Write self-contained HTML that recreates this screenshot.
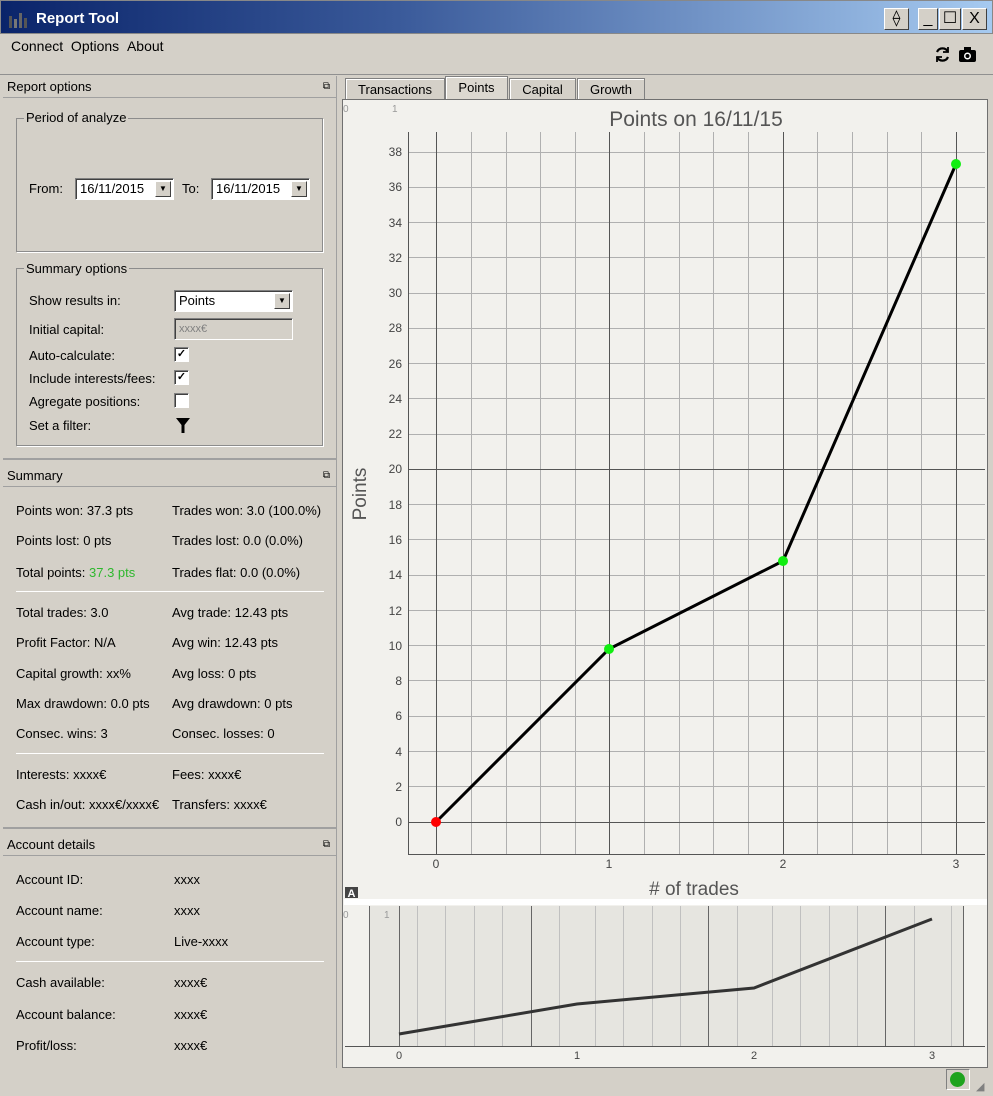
<!DOCTYPE html>
<html><head><meta charset="utf-8"><style>
*{margin:0;padding:0;box-sizing:border-box}
body{width:993px;height:1096px;background:#d4d0c8;font-family:"Liberation Sans",sans-serif;font-size:12px;color:#000;position:relative;overflow:hidden}
.a{position:absolute;white-space:nowrap}
.title{left:0;top:0;width:993px;height:34px;background:linear-gradient(90deg,#0a246a,#3a5a9a 40%,#a6caf0);border:1px solid #888}
.wb{position:absolute;top:8px;height:22px;background:#d4d0c8;border:1px solid;border-color:#fff #404040 #404040 #fff;font:16px "Liberation Sans",sans-serif;text-align:center;line-height:20px}
.hdr{border-bottom:1px solid #a0a0a0;height:22px;font-size:13px;line-height:22px;padding-left:4px;position:relative}
.grp{border:1px solid #8c8c8c;box-shadow:1px 1px 0 #fff}
.gl{background:#d4d0c8;padding:0 2px}
.inp{background:#fff;border:1px solid;border-color:#808080 #fff #fff #808080;box-shadow:inset 1px 1px 0 #404040;height:22px;line-height:20px;padding-left:4px;font-size:13px}
.dd{position:absolute;right:2px;top:2px;width:16px;height:16px;background:#d4d0c8;border:1px solid;border-color:#fff #404040 #404040 #fff;font-size:8px;line-height:14px;text-align:center}
.cb{width:15px;height:15px;background:#fff;border:1px solid;border-color:#808080 #fff #fff #808080;box-shadow:inset 1px 1px 0 #404040;font-size:11px;line-height:12px;text-align:center;font-weight:bold}
.t{font-size:13px}
.sep{height:1px;background:#a0a0a0;border-bottom:1px solid #fff}
.tab{position:absolute;top:78px;height:21px;border:1px solid #808080;border-bottom:none;background:#d4d0c8;font-size:13px;text-align:center;line-height:22px;box-shadow:inset 1px 1px 0 #fff}
</style></head><body>
<div class="a title"></div>
<svg class="a" style="left:8px;top:10px" width="20" height="18"><rect x="1" y="6" width="3" height="12" fill="#555"/><rect x="6" y="9" width="3" height="9" fill="#777"/><rect x="11" y="3" width="3" height="15" fill="#666"/><rect x="16" y="8" width="3" height="10" fill="#555"/></svg>
<div class="a" style="left:36px;top:10px;color:#fff;font-weight:bold;font-size:15px">Report Tool</div>
<div class="wb" style="left:884px;width:25px">⟠</div>
<div class="wb" style="left:918px;width:20px">_</div>
<div class="wb" style="left:939px;width:22px">☐</div>
<div class="wb" style="left:962px;width:25px">X</div>
<div class="a t" style="left:11px;top:38px;font-size:14px">Connect&nbsp;&nbsp;Options&nbsp;&nbsp;About</div>
<svg class="a" style="left:934px;top:46px" width="17" height="17" fill="none" stroke="#000" stroke-width="2.2"><path d="M14 6A6 6 0 0 0 3 6M3 11A6 6 0 0 0 14 11"/><path d="M14 1V6H9M3 16V11H8" stroke-width="1.8"/></svg>
<svg class="a" style="left:959px;top:47px" width="17" height="15"><rect x="0" y="3" width="17" height="12" rx="2"/><rect x="5" y="0" width="7" height="4"/><circle cx="8.5" cy="9" r="3.5" fill="#fff"/><circle cx="8.5" cy="9" r="2"/></svg>
<div class="a" style="left:0;top:74px;width:993px;height:1px;background:#909090"></div>

<!-- left panel -->
<div class="a" style="left:3px;top:76px;width:333px">
<div class="hdr">Report options<span style="position:absolute;right:6px;font-size:10px">⧉</span></div></div>
<div class="a grp" style="left:16px;top:118px;width:307px;height:134px"></div>
<div class="a gl t" style="left:24px;top:110px">Period of analyze</div>
<div class="a t" style="left:29px;top:181px">From:</div>
<div class="a inp" style="left:75px;top:178px;width:99px">16/11/2015<span class="dd">▼</span></div>
<div class="a t" style="left:182px;top:181px">To:</div>
<div class="a inp" style="left:211px;top:178px;width:99px">16/11/2015<span class="dd">▼</span></div>
<div class="a grp" style="left:16px;top:268px;width:307px;height:178px"></div>
<div class="a gl t" style="left:24px;top:261px">Summary options</div>
<div class="a t" style="left:29px;top:293px">Show results in:</div>
<div class="a inp" style="left:174px;top:290px;width:119px">Points<span class="dd">▼</span></div>
<div class="a t" style="left:29px;top:322px">Initial capital:</div>
<div class="a inp" style="left:174px;top:318px;width:119px;background:#d4d0c8;color:#808080;font-size:11px">xxxx€</div>
<div class="a t" style="left:29px;top:348px">Auto-calculate:</div><div class="a cb" style="left:174px;top:347px">✓</div>
<div class="a t" style="left:29px;top:371px">Include interests/fees:</div><div class="a cb" style="left:174px;top:370px">✓</div>
<div class="a t" style="left:29px;top:394px">Agregate positions:</div><div class="a cb" style="left:174px;top:393px"></div>
<div class="a t" style="left:29px;top:418px">Set a filter:</div>
<svg class="a" style="left:176px;top:418px" width="14" height="15"><path d="M0 0H14L8.5 7V15H5.5V7Z"/></svg>
<div class="a" style="left:3px;top:458px;width:333px;height:2px;background:#a0a0a0"></div>

<div class="a" style="left:3px;top:465px;width:333px"><div class="hdr">Summary<span style="position:absolute;right:6px;font-size:10px">⧉</span></div></div>
<div class="a t" style="left:16px;top:503px">Points won: 37.3 pts</div><div class="a t" style="left:172px;top:503px">Trades won: 3.0 (100.0%)</div>
<div class="a t" style="left:16px;top:533px">Points lost: 0 pts</div><div class="a t" style="left:172px;top:533px">Trades lost: 0.0 (0.0%)</div>
<div class="a t" style="left:16px;top:565px">Total points: <span style="color:#2eb82e">37.3 pts</span></div><div class="a t" style="left:172px;top:565px">Trades flat: 0.0 (0.0%)</div>
<div class="a sep" style="left:16px;top:591px;width:308px"></div>
<div class="a t" style="left:16px;top:605px">Total trades: 3.0</div><div class="a t" style="left:172px;top:605px">Avg trade: 12.43 pts</div>
<div class="a t" style="left:16px;top:635px">Profit Factor: N/A</div><div class="a t" style="left:172px;top:635px">Avg win: 12.43 pts</div>
<div class="a t" style="left:16px;top:666px">Capital growth: xx%</div><div class="a t" style="left:172px;top:666px">Avg loss: 0 pts</div>
<div class="a t" style="left:16px;top:696px">Max drawdown: 0.0 pts</div><div class="a t" style="left:172px;top:696px">Avg drawdown: 0 pts</div>
<div class="a t" style="left:16px;top:726px">Consec. wins: 3</div><div class="a t" style="left:172px;top:726px">Consec. losses: 0</div>
<div class="a sep" style="left:16px;top:753px;width:308px"></div>
<div class="a t" style="left:16px;top:767px">Interests: xxxx€</div><div class="a t" style="left:172px;top:767px">Fees: xxxx€</div>
<div class="a t" style="left:16px;top:797px">Cash in/out: xxxx€/xxxx€</div><div class="a t" style="left:172px;top:797px">Transfers: xxxx€</div>
<div class="a" style="left:3px;top:827px;width:333px;height:2px;background:#a0a0a0"></div>

<div class="a" style="left:3px;top:834px;width:333px"><div class="hdr">Account details<span style="position:absolute;right:6px;font-size:10px">⧉</span></div></div>
<div class="a t" style="left:16px;top:872px">Account ID:</div><div class="a t" style="left:174px;top:872px">xxxx</div>
<div class="a t" style="left:16px;top:903px">Account name:</div><div class="a t" style="left:174px;top:903px">xxxx</div>
<div class="a t" style="left:16px;top:934px">Account type:</div><div class="a t" style="left:174px;top:934px">Live-xxxx</div>
<div class="a sep" style="left:16px;top:961px;width:308px"></div>
<div class="a t" style="left:16px;top:975px">Cash available:</div><div class="a t" style="left:174px;top:975px">xxxx€</div>
<div class="a t" style="left:16px;top:1007px">Account balance:</div><div class="a t" style="left:174px;top:1007px">xxxx€</div>
<div class="a t" style="left:16px;top:1038px">Profit/loss:</div><div class="a t" style="left:174px;top:1038px">xxxx€</div>
<div class="a" style="left:336px;top:76px;width:1px;height:992px;background:#a0a0a0"></div>

<!-- tabs -->
<div class="tab" style="left:345px;width:100px">Transactions</div>
<div class="tab" style="left:445px;width:63px;top:76px;height:24px;background:#dcd8d0">Points</div>
<div class="tab" style="left:509px;width:67px">Capital</div>
<div class="tab" style="left:577px;width:68px">Growth</div>

<svg class="a" style="left:342px;top:99px" width="646" height="969" font-family="Liberation Sans,sans-serif">
<rect x="0.5" y="0.5" width="645" height="968" fill="#f2f1ed" stroke="#707070"/>
<g transform="translate(-342,-99)">
<text x="343" y="112" font-size="10" fill="#999">0</text><text x="392" y="112" font-size="10" fill="#999">1</text>
<text x="696" y="126" font-size="21" fill="#555" text-anchor="middle">Points on 16/11/15</text>
<g stroke="#b0b0b0" stroke-width="1" fill="none">
<path d="M471.5 132V854M506.5 132V854M540.5 132V854M575.5 132V854M644.5 132V854M679.5 132V854M713.5 132V854M748.5 132V854M817.5 132V854M852.5 132V854M887.5 132V854M921.5 132V854"/>
<path d="M408 786.5H985M408 751.5H985M408 716.5H985M408 680.5H985M408 645.5H985M408 610.5H985M408 575.5H985M408 539.5H985M408 504.5H985M408 434.5H985M408 398.5H985M408 363.5H985M408 328.5H985M408 293.5H985M408 257.5H985M408 222.5H985M408 187.5H985M408 152.5H985"/>
</g>
<g stroke="#555" fill="none"><path d="M436.5 132V854M609.5 132V854M783.5 132V854M956.5 132V854M408 469.5H985M408 822.5H985"/><path d="M408.5 132V854.5H985"/></g>
<g font-size="12" fill="#444" text-anchor="end">
<text x="402" y="826">0</text><text x="402" y="791">2</text><text x="402" y="756">4</text><text x="402" y="720">6</text><text x="402" y="685">8</text><text x="402" y="650">10</text><text x="402" y="615">12</text><text x="402" y="579">14</text><text x="402" y="544">16</text><text x="402" y="509">18</text><text x="402" y="473">20</text><text x="402" y="438">22</text><text x="402" y="403">24</text><text x="402" y="368">26</text><text x="402" y="332">28</text><text x="402" y="297">30</text><text x="402" y="262">32</text><text x="402" y="227">34</text><text x="402" y="191">36</text><text x="402" y="156">38</text>
</g>
<g font-size="12" fill="#444" text-anchor="middle"><text x="436" y="868">0</text><text x="609" y="868">1</text><text x="783" y="868">2</text><text x="956" y="868">3</text></g>
<text x="366" y="494" font-size="19" fill="#555" text-anchor="middle" transform="rotate(-90 366 494)">Points</text>
<text x="694" y="895" font-size="19" fill="#555" text-anchor="middle"># of trades</text>
<polyline points="436,822 609,649 783,561 956,164" fill="none" stroke="#000" stroke-width="3"/>
<circle cx="436" cy="822" r="5" fill="#f00"/><circle cx="609" cy="649" r="5" fill="#1e1"/><circle cx="783" cy="561" r="5" fill="#1e1"/><circle cx="956" cy="164" r="5" fill="#1e1"/>
<rect x="345" y="887" width="13" height="11" fill="#444"/><text x="351.5" y="897" font-size="11" fill="#fff" font-weight="bold" text-anchor="middle">A</text>
<rect x="344" y="899" width="643" height="6" fill="#fff"/>
<rect x="369" y="906" width="594" height="140" fill="#e6e5e0"/>
<g stroke="#c0c0c0" fill="none"><path d="M417.5 906V1046M445.5 906V1046M474.5 906V1046M502.5 906V1046M559.5 906V1046M595.5 906V1046M623.5 906V1046M652.5 906V1046M680.5 906V1046M737.5 906V1046M772.5 906V1046M800.5 906V1046M829.5 906V1046M857.5 906V1046M914.5 906V1046M951.5 906V1046"/></g>
<g stroke="#666" fill="none"><path d="M369.5 906V1046M399.5 906V1046M531.5 906V1046M708.5 906V1046M885.5 906V1046M963.5 906V1046"/></g>
<path d="M345 1046.5H985" stroke="#555" fill="none"/>
<text x="343" y="918" font-size="10" fill="#999">0</text><text x="384" y="918" font-size="10" fill="#999">1</text>
<polyline points="399,1034 577,1004 754,988 932,919" fill="none" stroke="#333" stroke-width="3"/>
<g font-size="11" fill="#444" text-anchor="middle"><text x="399" y="1059">0</text><text x="577" y="1059">1</text><text x="754" y="1059">2</text><text x="932" y="1059">3</text></g>
</g></svg>
<div class="a" style="left:946px;top:1069px;width:24px;height:21px;border:1px solid;border-color:#808080 #fff #fff #808080"><div style="margin:2px 0 0 3px;width:15px;height:15px;border-radius:50%;background:#1ea31e"></div></div>
<div class="a" style="left:976px;top:1080px;font-size:11px;color:#808080">◢</div>
</body></html>
